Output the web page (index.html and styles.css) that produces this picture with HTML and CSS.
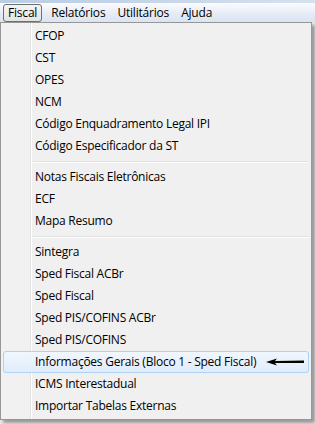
FILE: index.html
```html
<!DOCTYPE html>
<html lang="pt-BR">
<head>
  <meta charset="UTF-8" />
  <title>Menu Fiscal</title>
  <link rel="stylesheet" href="styles.css">
</head>
<body>

  <div class="titlebar"></div>

  <div class="menubar">
    <span class="menubar-item active">Fiscal</span>
    <span class="menubar-item">Relatórios</span>
    <span class="menubar-item">Utilitários</span>
    <span class="menubar-item">Ajuda</span>
  </div>

  <div class="dropdown">
    <div class="item">CFOP</div>
    <div class="item">CST</div>
    <div class="item">OPES</div>
    <div class="item">NCM</div>
    <div class="item">Código Enquadramento Legal IPI</div>
    <div class="item">Código Especificador da ST</div>
    <div class="separator"></div>
    <div class="item">Notas Fiscais Eletrônicas</div>
    <div class="item">ECF</div>
    <div class="item">Mapa Resumo</div>
    <div class="separator"></div>
    <div class="item">Sintegra</div>
    <div class="item">Sped Fiscal ACBr</div>
    <div class="item">Sped Fiscal</div>
    <div class="item">Sped PIS/COFINS ACBr</div>
    <div class="item">Sped PIS/COFINS</div>
    <div class="item hover">
      Informações Gerais (Bloco 1 - Sped Fiscal)
      <svg class="arrow" width="40" height="10" viewBox="0 0 40 10">
        <path d="M0 5 L11 1.5 L9 4 L38 3.6 L38 6 L9 6 L11 8.5 Z" fill="#000"/>
      </svg>
    </div>
    <div class="item">ICMS Interestadual</div>
    <div class="item">Importar Tabelas Externas</div>
  </div>

</body>
</html>
```

FILE: styles.css
```css
body {
  margin: 0;
  width: 315px;
  height: 424px;
  overflow: hidden;
  font-family: "Open Sans", "Noto Sans", sans-serif;
  font-size: 12px;
  color: #000;
  background: #e9e9e9;
}

.titlebar {
  height: 3px;
  background: linear-gradient(90deg, #b9cde4, #c9d8ea 60%, #d6e1ee);
}

.menubar {
  height: 19px;
  display: flex;
  align-items: center;
  padding-left: 3px;
  background: linear-gradient(#fbfcfe, #e6ecf6 55%, #dbe4f3);
}

.menubar-item {
  padding: 0 5px;
  height: 16px;
  line-height: 15px;
  margin-top: 1px;
  border: 1px solid transparent;
  border-radius: 3px;
  letter-spacing: -0.2px;
}

.menubar-item.active {
  border-color: #6f6f6f;
  background: linear-gradient(#f4f4f4, #e4e4e4);
  padding: 0 4px;
  margin-right: 3px;
}

.dropdown {
  width: 308px;
  padding: 2px 1px 2px 1px;
  background: linear-gradient(90deg, #f1f1f1 29px, #e2e3e3 29px, #e2e3e3 30px, #fff 30px, #fff 31px, #f0f0f0 31px);
  border: 1px solid #979797;
  box-shadow: 3px 3px 3px rgba(0, 0, 0, 0.35);
  display: flex;
  flex-direction: column;
}

.item {
  position: relative;
  height: 22px;
  line-height: 21px;
  padding-left: 33px;
  letter-spacing: -0.25px;
}

.item.hover {
  margin: 0 1px;
  height: 20px;
  line-height: 19px;
  padding-left: 31px;
  border: 1px solid #aed1f4;
  border-radius: 3px;
  background: linear-gradient(rgba(241, 247, 254, 0.9), rgba(222, 236, 252, 0.9));
}

.arrow {
  position: absolute;
  right: 2px;
  top: 5px;
}

.separator {
  height: 9px;
  margin-left: 31px;
  margin-right: 2px;
  display: flex;
  flex-direction: column;
  justify-content: center;
}

.separator::before {
  content: "";
  height: 1px;
  background: #e0e0e0;
  border-bottom: 1px solid #fff;
}
```
